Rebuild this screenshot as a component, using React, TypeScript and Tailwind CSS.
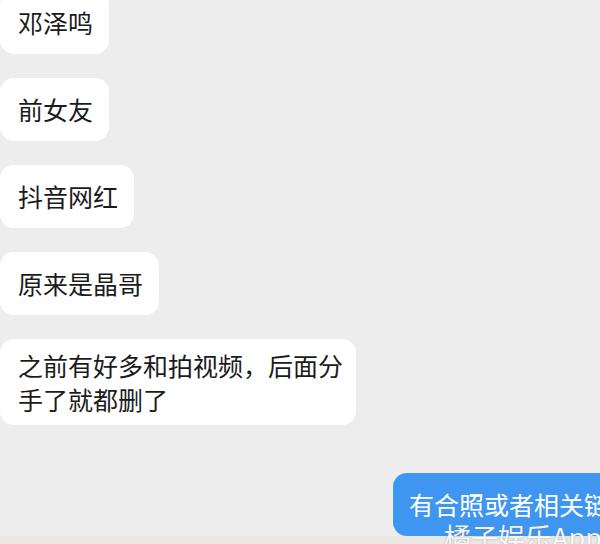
import React from "react";

const font = { fontFamily: '"Noto Sans CJK SC", "Noto Sans", sans-serif' };

function Left({ text }: { text: string }) {
  return (
    <div className="self-start rounded-[14px] bg-white pl-[18px] pr-[16px] py-[14px] text-[25px] leading-[35px] text-[#1b1b1b]">
      {text}
    </div>
  );
}

export default function App() {
  return (
    <div
      className="relative h-[544px] w-[600px] overflow-hidden bg-[#ededed]"
      style={font}
    >
      <div className="mt-[-9px] flex flex-col gap-[24px]">
        <Left text="邓泽鸣" />
        <Left text="前女友" />
        <Left text="抖音网红" />
        <Left text="原来是晶哥" />
        <div className="w-[356px] self-start rounded-[14px] bg-white pl-[18px] pr-[8px] py-[9px] text-[25px] leading-[34px] text-[#1b1b1b]">
          之前有好多和拍视频，后面分
          <br />
          手了就都删了
        </div>
        <div className="ml-[393px] mt-[24px] w-[260px] shrink-0 whitespace-nowrap rounded-[14px] bg-[#3f96f0] pl-[16px] py-[14px] text-[25px] leading-[35px] text-white">
          有合照或者相关链接
        </div>
      </div>
      <div className="absolute left-0 right-0 top-[536px] h-[8px] bg-[#ebe8e4]" />
      <div className="absolute left-[444px] top-[519px] whitespace-nowrap text-[27px] leading-[36px] text-white/90 [text-shadow:0_0_2px_rgba(120,120,120,0.6)]">
        橘子娱乐App
      </div>
    </div>
  );
}
